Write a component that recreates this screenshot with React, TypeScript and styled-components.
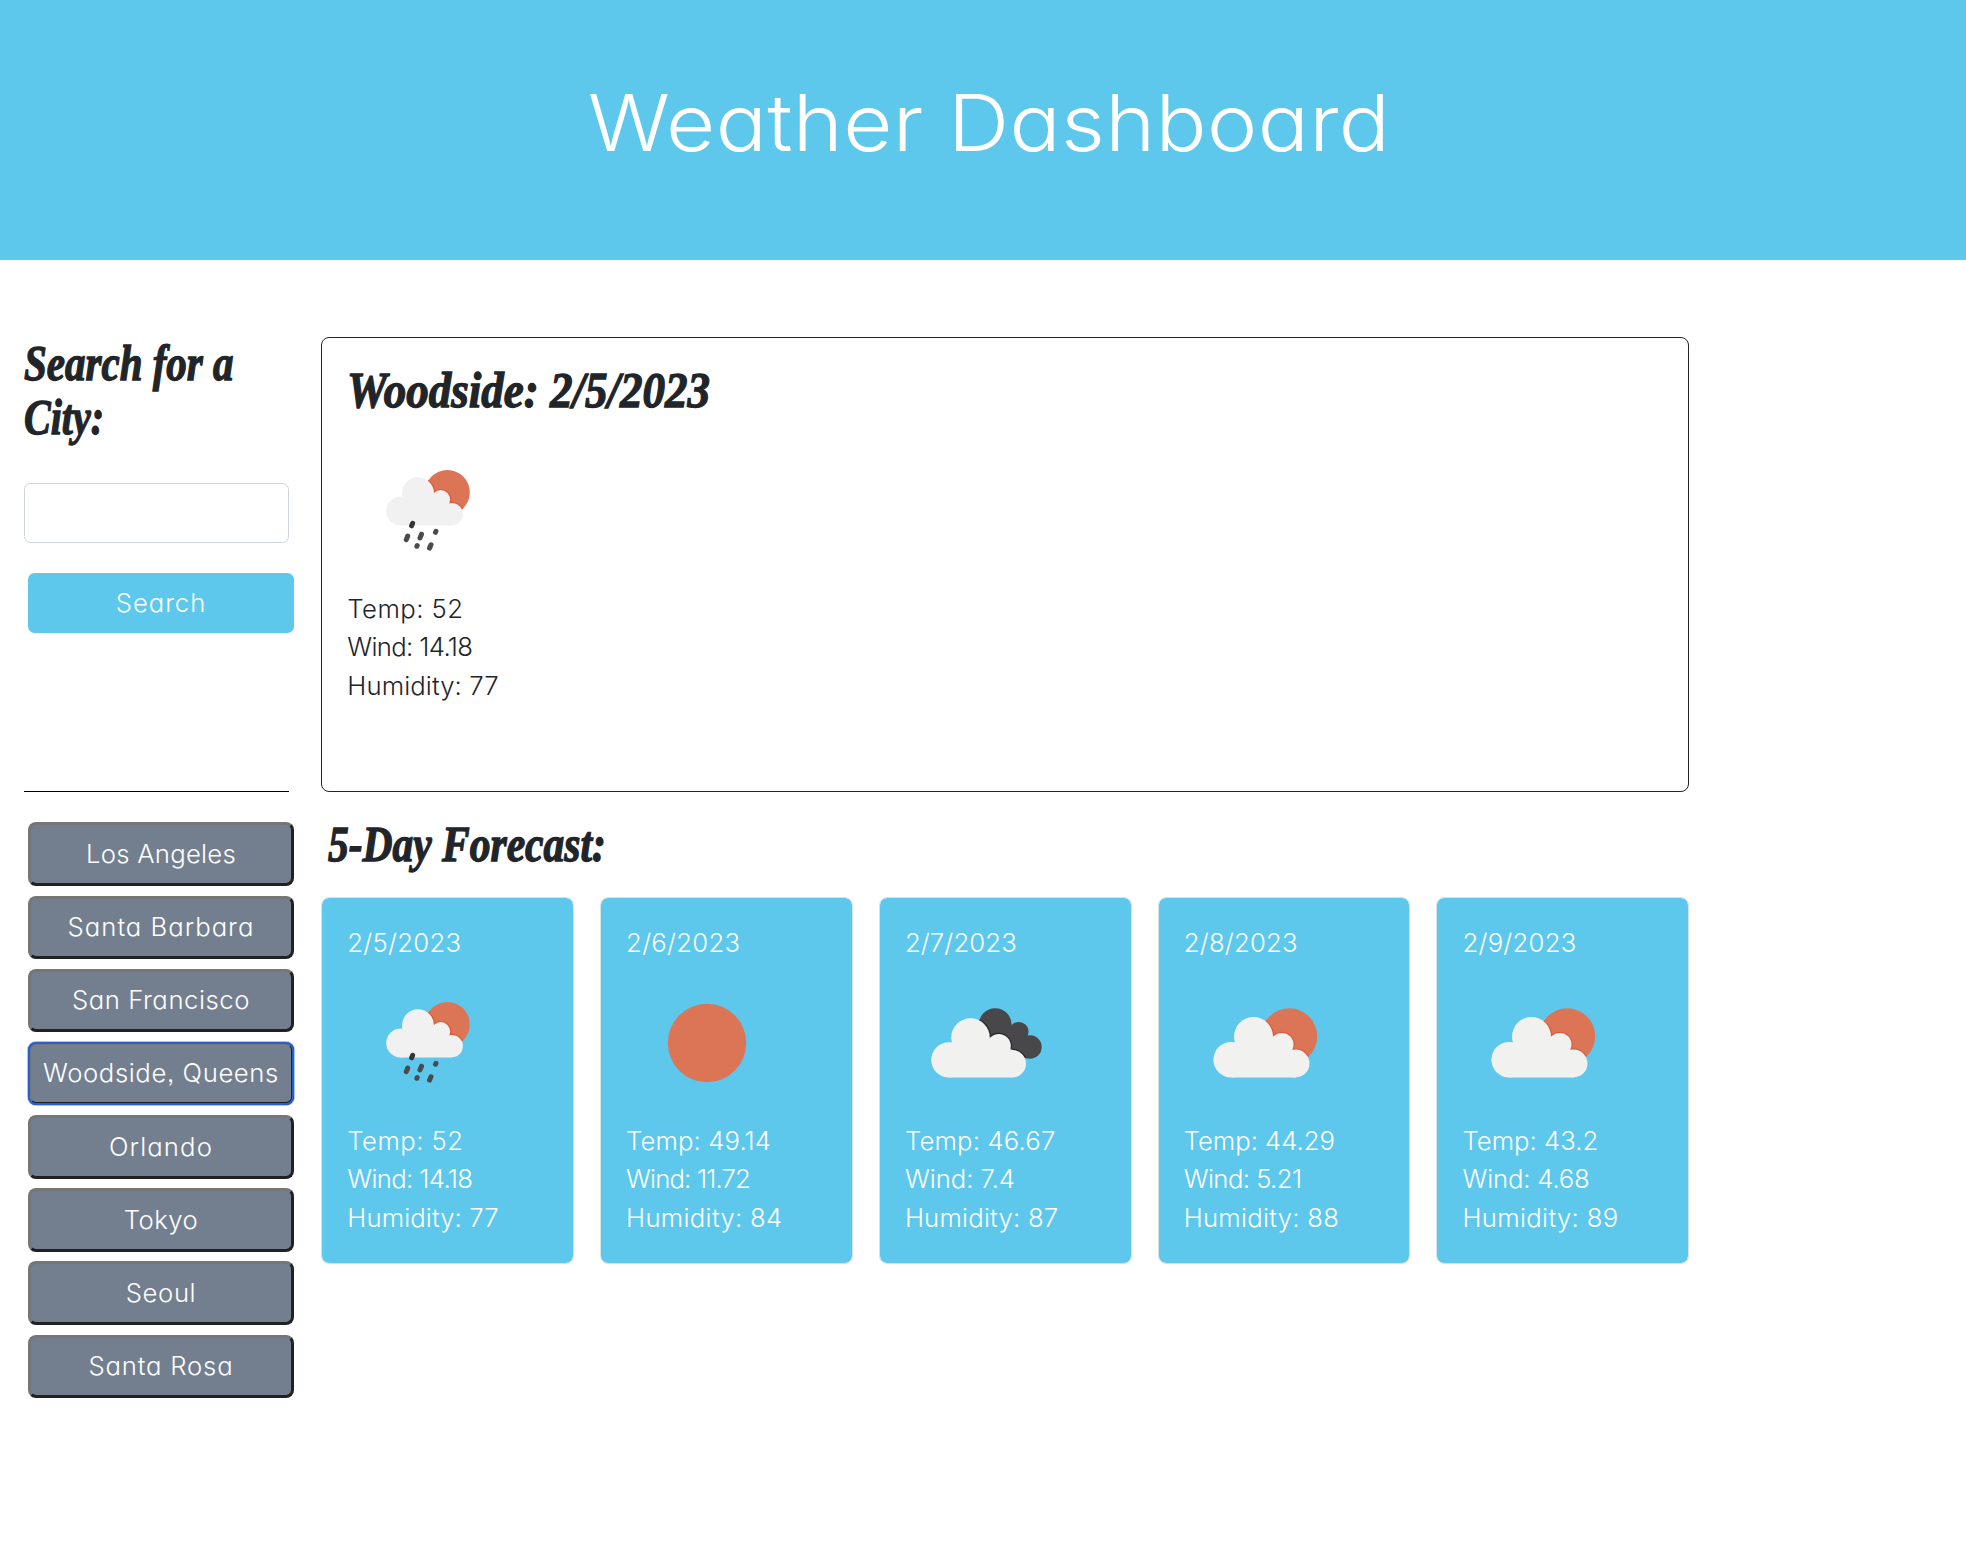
import React from "react";
import styled, { createGlobalStyle } from "styled-components";

const sky = "#5dc7ec";
const ink = "#212529";

const GlobalStyle = createGlobalStyle`
  *, *::before, *::after { box-sizing: border-box; }
  body {
    margin: 0;
    background: #fff;
    color: ${ink};
    font-family: Inter, "Open Sans", sans-serif;
    font-feature-settings: "cv11", "ss03";
    font-weight: 320;
    font-size: 25.7px;
    line-height: 38.4px;
  }
`;

const Header = styled.header`
  display: flex;
  justify-content: center;
  height: 260px;
  padding: 75.6px 0 0 13px;
  background: ${sky};
  color: #fff;
`;

const PageTitle = styled.h1`
  margin: 0;
  font-size: 78px;
  font-weight: 330;
  line-height: 94px;
  letter-spacing: 0.3px;
  white-space: nowrap;
  transform: scaleX(1.09);
`;

const Layout = styled.div`
  display: flex;
  align-items: flex-start;
  gap: 32px;
  padding: 77.3px 0 0 24px;
`;

const Sidebar = styled.aside`
  width: 265.3px;
`;

const Heading = styled.h2`
  margin: 0;
  font-family: "Liberation Serif", serif;
  font-style: italic;
  font-weight: 700;
  font-size: 50px;
  line-height: 54px;
`;

const SearchHeading = styled(Heading)`
  margin-top: -1.2px;
`;

const ForecastHeading = styled(Heading)`
  margin: 25px 0 26.5px;
  padding-left: 7px;
`;

const Condensed = styled.span<{ $ratio: number }>`
  display: block;
  width: max-content;
  transform: scaleX(${(p) => p.$ratio});
  transform-origin: left;
  -webkit-text-stroke: 1.3px ${ink};
`;

const CityInput = styled.input`
  display: block;
  width: 100%;
  height: 59.7px;
  margin-top: 38.9px;
  padding: 0 18px;
  border: 1px solid #ced4da;
  border-radius: 6.5px;
  background: #fff;
  font: inherit;
`;

const Tracked = styled.span<{ $track?: number }>`
  letter-spacing: ${(p) => p.$track ?? 0}px;
`;

const SearchButton = styled.button`
  display: flex;
  align-items: center;
  justify-content: center;
  width: 266px;
  height: 60px;
  margin: 30.2px 0 0 4px;
  padding: 0;
  border: 0;
  border-radius: 6.5px;
  background: ${sky};
  color: #fff;
  font: inherit;
  font-feature-settings: inherit;
`;

const Divider = styled.hr`
  height: 1px;
  margin: 158.1px 0 30.4px;
  border: 0;
  background: #000;
`;

const CityList = styled.div`
  display: flex;
  flex-direction: column;
  gap: 9.7px;
  padding-left: 4px;
`;

const CityButton = styled.button<{ $active: boolean }>`
  display: flex;
  align-items: center;
  justify-content: center;
  width: 266px;
  height: 63.5px;
  padding: 0;
  border: 3px solid;
  border-color: #767676 #212121 #212121 #767676;
  border-radius: 8px;
  background: #737f8f;
  color: #fff;
  font: inherit;
  font-feature-settings: inherit;
  white-space: nowrap;
  outline: ${(p) => (p.$active ? "2px solid #265fd0" : "none")};
  outline-offset: -2px;
  box-shadow: ${(p) => (p.$active ? "0 0 0 1px #a9c4f2" : "none")};
`;

const Main = styled.main`
  width: 1368px;
`;

const Today = styled.section`
  height: 454.5px;
  padding: 24.5px 25px;
  border: 1px solid ${ink};
  border-radius: 8px;
`;

const Forecast = styled.section`
  display: grid;
  grid-template-columns: repeat(5, 1fr);
  gap: 26px;
`;

const DayCard = styled.article`
  height: 366.3px;
  padding: 25.6px 25px;
  border: 1px solid #d5e2e8;
  border-radius: 8px;
  background: ${sky};
  background-clip: padding-box;
  color: #fff;
`;

const Line = styled.div<{ $track: number }>`
  letter-spacing: ${(p) => p.$track}px;
  white-space: nowrap;
`;

const IconSvg = styled.svg<{ $gap: number }>`
  display: block;
  width: 160px;
  height: 159.2px;
  margin: ${(p) => p.$gap}px 0 0 1px;
`;

type Kind = "rain" | "sun" | "few" | "broken";
type Circle = [number, number, number];

interface CloudShape {
  lobes: Circle[];
  base: string;
}

const rainCloud: CloudShape = {
  lobes: [[70, 62.3, 16], [52.7, 80, 14.5], [92.7, 68.6, 9.5], [103.7, 83.1, 11.2]],
  base: "M52.7 94.5H103.7L103 76L92 64L76 62L56 68Z",
};
const fewCloud: CloudShape = {
  lobes: [[68.5, 73.6, 19.5], [46.2, 96.7, 17.8], [96.8, 81.6, 11.7], [110.6, 100.5, 13.9]],
  base: "M46.2 114.5H110.6L108 90L96 78L76 74L52 84Z",
};
const brokenCloud: CloudShape = {
  lobes: [[64.5, 74.6, 19.3], [42.8, 96.9, 17.6], [92.8, 83, 12], [106.2, 100.7, 13.8]],
  base: "M42.8 114.5H106.2L104 90L92 78L70 74L48 84Z",
};

function Cloud({ shape, fill, edge }: { shape: CloudShape; fill: string; edge?: string }) {
  return (
    <g fill={edge ?? fill} stroke={edge} strokeWidth={edge ? 2.4 : 0}>
      <path d={shape.base} />
      {shape.lobes.map(([x, y, r]) => (
        <circle key={x} cx={x} cy={y} r={r} />
      ))}
    </g>
  );
}

function WeatherIcon({ kind, id, gap }: { kind: Kind; id: string; gap: number }) {
  const sun: Circle =
    kind === "sun" ? [80, 80, 39.2] : kind === "rain" ? [99.4, 61.4, 22.4] : [104.2, 73.3, 28];
  const clip = `back-${id}`;
  const shape = kind === "rain" ? rainCloud : kind === "few" ? fewCloud : brokenCloud;
  const back =
    kind === "broken" ? (
      <>
        <circle cx="89.2" cy="61.6" r="16.4" />
        <circle cx="112.8" cy="68.7" r="9.8" />
        <circle cx="123.9" cy="84" r="11.8" />
        <path d="M89 76L120 95L124 76L112 64L98 62Z" />
      </>
    ) : (
      <circle cx={sun[0]} cy={sun[1]} r={sun[2]} />
    );
  return (
    <IconSvg $gap={gap} viewBox="0 0 160 159.2" aria-hidden="true">
      <g fill={kind === "broken" ? "#48484a" : "#dc7555"}>{back}</g>
      {kind !== "sun" && (
        <>
          <clipPath id={clip}>{back}</clipPath>
          <g clipPath={`url(#${clip})`}>
            <Cloud shape={shape} fill="none" edge={kind === "broken" ? "#262628" : "#dc5b38"} />
          </g>
          <Cloud shape={shape} fill={kind === "rain" ? "#f1f1f1" : "#f1f2f0"} />
        </>
      )}
      {kind === "rain" && (
        <g stroke="#4b4b4d" strokeWidth="5" strokeLinecap="round">
          <path stroke="#343436" d="M64.6 92.4L63.6 94.8" />
          <path d="M59.7 105L58.3 108.6M73.5 103.2L72 106.9M87.9 100.4L87.5 101.3M69.2 114.5L68.9 115.3M83 113.8L81.5 117.1" />
        </g>
      )}
    </IconSvg>
  );
}

const cities = [
  { name: "Los Angeles", track: 0.24 },
  { name: "Santa Barbara", track: 1.0 },
  { name: "San Francisco", track: 0.56 },
  { name: "Woodside, Queens", track: 0.6, active: true },
  { name: "Orlando", track: 1.1 },
  { name: "Tokyo", track: 0.48 },
  { name: "Seoul", track: 0.58 },
  { name: "Santa Rosa", track: 0.8 },
];

interface Day {
  date: string;
  kind: Kind;
  temp: string;
  wind: string;
  humidity: string;
  tracks: [number, number, number, number];
}

const days: Day[] = [
  { date: "2/5/2023", kind: "rain", temp: "52", wind: "14.18", humidity: "77", tracks: [0.26, 0.45, -0.65, 0.1] },
  { date: "2/6/2023", kind: "sun", temp: "49.14", wind: "11.72", humidity: "84", tracks: [0.28, 0.1, -0.85, 0.3] },
  { date: "2/7/2023", kind: "broken", temp: "46.67", wind: "7.4", humidity: "87", tracks: [0.12, 0.17, -0.04, 0.2] },
  { date: "2/8/2023", kind: "few", temp: "44.29", wind: "5.21", humidity: "88", tracks: [0.24, -0.03, -0.57, 0.26] },
  { date: "2/9/2023", kind: "few", temp: "43.2", wind: "4.68", humidity: "89", tracks: [0.24, 0, -0.18, 0.32] },
];

function Readings({ day }: { day: Day }) {
  return (
    <>
      <Line $track={day.tracks[1]}>Temp: {day.temp}</Line>
      <Line $track={day.tracks[2]}>Wind: {day.wind}</Line>
      <Line $track={day.tracks[3]}>Humidity: {day.humidity}</Line>
    </>
  );
}

export default function App() {
  return (
    <>
      <GlobalStyle />
      <Header>
        <PageTitle>Weather Dashboard</PageTitle>
      </Header>
      <Layout>
        <Sidebar>
          <SearchHeading>
            <Condensed $ratio={0.82}>Search for a</Condensed>
            <Condensed $ratio={0.8}>City:</Condensed>
          </SearchHeading>
          <CityInput aria-label="City" />
          <SearchButton>
            <Tracked $track={0.92}>Search</Tracked>
          </SearchButton>
          <Divider />
          <CityList>
            {cities.map((c) => (
              <CityButton key={c.name} $active={!!c.active}>
                <Tracked $track={c.track}>{c.name}</Tracked>
              </CityButton>
            ))}
          </CityList>
        </Sidebar>
        <Main>
          <Today>
            <Heading>
              <Condensed $ratio={0.9}>Woodside: 2/5/2023</Condensed>
            </Heading>
            <WeatherIcon kind="rain" id="today" gap={14} />
            <Readings day={days[0]} />
          </Today>
          <ForecastHeading>
            <Condensed $ratio={0.83}>5-Day Forecast:</Condensed>
          </ForecastHeading>
          <Forecast>
            {days.map((d, i) => (
              <DayCard key={d.date}>
                <Line $track={d.tracks[0]}>{d.date}</Line>
                <WeatherIcon kind={d.kind} id={`day-${i}`} gap={0.6} />
                <Readings day={d} />
              </DayCard>
            ))}
          </Forecast>
        </Main>
      </Layout>
    </>
  );
}
